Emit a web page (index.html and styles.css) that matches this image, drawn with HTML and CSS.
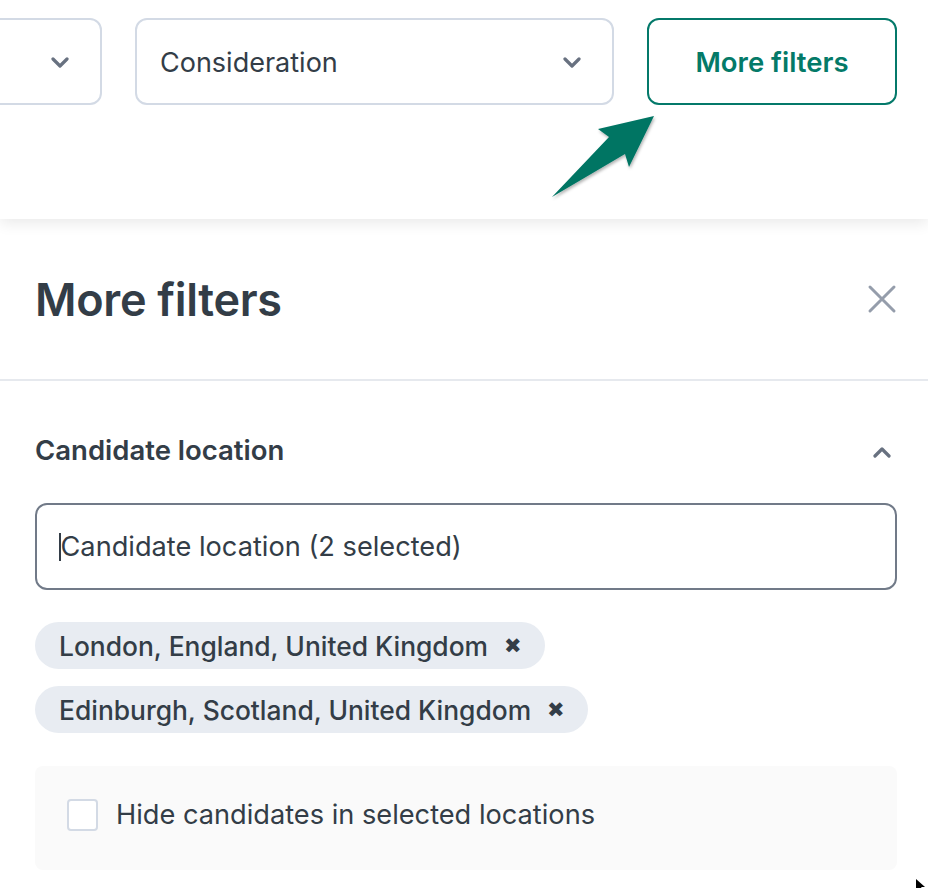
FILE: index.html
```html
<!DOCTYPE html>
<html lang="en">

<head>
    <meta charset="UTF-8">
    <meta name="viewport" content="width=device-width, initial-scale=1.0">
    <title>More filters</title>
    <link rel="stylesheet" href="styles.css">
</head>

<body>
    <div class="filter-bar">
        <div class="select select-first">
            <span class="select-label">Stage</span>
            <svg class="chevron" viewBox="0 0 20 12"><path d="M3 2 L10 9 L17 2" /></svg>
        </div>
        <div class="select select-wide">
            <span class="select-label">Consideration</span>
            <svg class="chevron" viewBox="0 0 20 12"><path d="M3 2 L10 9 L17 2" /></svg>
        </div>
        <button class="btn-outline">More filters</button>

        <!-- pointer arrow over the bar -->
        <svg class="pointer-arrow" width="928" height="230" viewBox="0 0 928 230">
            <defs>
                <filter id="arrowShadow" x="-20%" y="-20%" width="140%" height="140%">
                    <feDropShadow dx="1" dy="2" stdDeviation="1.5" flood-color="#000" flood-opacity="0.3" />
                </filter>
            </defs>
            <polygon points="654,116 629,167 625,154 552,197 609,137 598,129" fill="#037564" filter="url(#arrowShadow)" />
        </svg>
    </div>

    <div class="panel">
        <div class="panel-header">
            <h1 class="panel-title">More filters</h1>
            <svg class="close-icon" viewBox="0 0 30 30"><path d="M3 3 L27 27 M27 3 L3 27" /></svg>
        </div>

        <div class="section">
            <div class="section-head">
                <span class="section-title">Candidate location</span>
                <svg class="chevron chevron-up" viewBox="0 0 20 12"><path d="M3 10 L10 3 L17 10" /></svg>
            </div>

            <div class="text-input">
                <span class="caret"></span>
                <span class="placeholder">Candidate location (2 selected)</span>
            </div>

            <div class="tags">
                <span class="tag">London, England, United Kingdom <span class="tag-x">✖</span></span>
                <span class="tag">Edinburgh, Scotland, United Kingdom <span class="tag-x">✖</span></span>
            </div>

            <div class="option-box">
                <label class="check-row">
                    <span class="checkbox"></span>
                    Hide candidates in selected locations
                </label>
            </div>
        </div>
    </div>

    <svg class="mouse" width="12" height="12" viewBox="0 0 12 12"><path d="M0 0 L0 12 L3 9 L6 12 L7 11 L5 8 L9 8 Z" fill="#000" /></svg>
</body>

</html>
```

FILE: styles.css
```css
body {
    margin: 0;
    font-family: Inter, "Noto Sans", sans-serif;
    color: #333d47;
    background: #fff;
    overflow: hidden;
    height: 888px;
    position: relative;
}

/* top filter bar */
.filter-bar {
    position: relative;
    height: 219px;
    box-sizing: border-box;
    padding: 18px 31px 0 0;
    display: flex;
    justify-content: flex-end;
    align-items: flex-start;
    gap: 33px;
    box-shadow: 0 4px 14px rgba(0, 0, 0, 0.09);
    z-index: 2;
    background: #fff;
}

.select {
    flex-shrink: 0;
    height: 87px;
    box-sizing: border-box;
    border: 2px solid #d3dae5;
    border-radius: 12px;
    display: flex;
    align-items: center;
    justify-content: space-between;
    padding: 2px 30px 0 23px;
    font-size: 27px;
}

.select-first {
    width: 240px;
}

.select-first .select-label {
    visibility: hidden;
}

.select-wide {
    width: 479px;
}

.chevron {
    width: 20px;
    height: 12px;
    fill: none;
    stroke: #687180;
    stroke-width: 3.2;
    stroke-linecap: round;
    stroke-linejoin: round;
}

.btn-outline {
    flex-shrink: 0;
    width: 250px;
    height: 87px;
    border: 2px solid #04796a;
    border-radius: 12px;
    background: #fff;
    color: #047a68;
    font-family: inherit;
    font-size: 27.5px;
    font-weight: 600;
}

.pointer-arrow {
    position: absolute;
    left: 0;
    top: 0;
    pointer-events: none;
}

/* side panel */
.panel-header {
    height: 160px;
    padding: 0 31px 0 35px;
    display: flex;
    align-items: center;
    justify-content: space-between;
    border-bottom: 2px solid #e6e9ee;
}

.panel-title {
    margin: 0;
    font-size: 45px;
    font-weight: 600;
    letter-spacing: -0.3px;
}

.close-icon {
    width: 30px;
    height: 30px;
    fill: none;
    stroke: #959dab;
    stroke-width: 3;
    stroke-linecap: round;
}

.section {
    padding: 54px 31px 0 35px;
}

.section-head {
    height: 30px;
    display: flex;
    align-items: center;
    justify-content: space-between;
    padding-right: 5px;
}

.section-title {
    font-size: 27.5px;
    font-weight: 600;
}

.chevron-up {
    margin-top: 4px;
}

.text-input {
    margin-top: 38px;
    height: 87px;
    box-sizing: border-box;
    border: 2px solid #717a88;
    border-radius: 12px;
    display: flex;
    align-items: center;
    padding-left: 22px;
    font-size: 27.2px;
}

.caret {
    width: 1.5px;
    height: 28px;
    background: #333d47;
}

.tags {
    margin-top: 32px;
    display: flex;
    flex-direction: column;
    align-items: flex-start;
    gap: 17px;
}

.tag {
    height: 47px;
    box-sizing: border-box;
    padding: 0 23px 0 24px;
    border-radius: 24px;
    background: #e8ecf2;
    display: inline-flex;
    align-items: center;
    font-size: 26.4px;
    font-weight: 500;
}

.tag-x {
    font-size: 21px;
    margin-left: 16px;
    color: #333d47;
}

.option-box {
    margin-top: 33px;
    height: 104px;
    box-sizing: border-box;
    background: #fafafa;
    border-radius: 8px;
    padding: 32px 0 0 32px;
}

.check-row {
    display: flex;
    align-items: center;
    font-size: 27.2px;
    gap: 18px;
}

.checkbox {
    width: 31px;
    height: 32px;
    box-sizing: border-box;
    border: 2px solid #d3dae5;
    border-radius: 4px;
    background: #fff;
}

.mouse {
    position: absolute;
    left: 916px;
    top: 879px;
}
```
